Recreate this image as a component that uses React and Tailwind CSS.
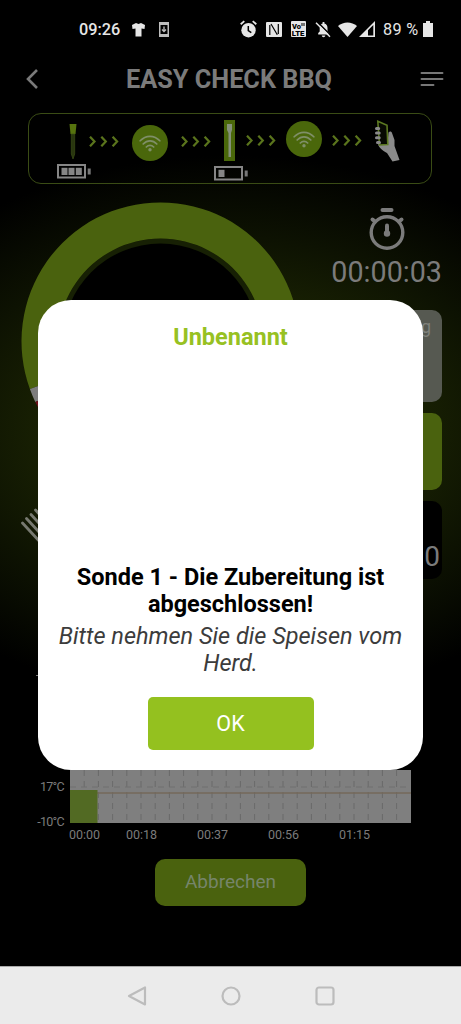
import React from 'react';

const timeLabels = ['00:00', '00:18', '00:37', '00:56', '01:15'];

function StatusBar() {
  return (
    <div className="h-[58px] shrink-0 flex items-center pl-[79px] text-[#e6e6e6]">
      <span className="w-[53px] pt-[2px] text-[16.3px] leading-5 font-medium">09:26</span>
      <svg className="w-[13px] h-[15px]" viewBox="0 0 13 15" fill="currentColor">
        <path d="M4 1 6.500 2 9 1 13 3 12.500 7 9.500 6.500V14.500H3.500V6.500L.5 7 0 3Z" />
      </svg>
      <svg className="ml-[14px] w-[10px] h-[15px]" viewBox="0 0 10 15" fill="none" stroke="#bdbdbd">
        <rect x=".75" y=".75" width="8.500" height="13.500" strokeWidth="1.500" />
        <path d="M1 2h8M1 13h8" strokeWidth="2" />
        <path d="M5 4.500v5M3 7.500l2 2 2-2" strokeWidth="1.300" />
      </svg>

      {/* Right side icons */}
      <svg className="ml-[71px] w-[17px] h-[18px]" viewBox="0 0 17 18">
        <circle cx="8.500" cy="10.200" r="7.200" fill="currentColor" />
        <path d="M.7 4.200 4.300 1.100M16.300 4.200 12.700 1.100" stroke="currentColor" strokeWidth="1.800" />
        <path d="M8.300 6v4.700l3 2" stroke="#000" strokeWidth="1.500" fill="none" />
      </svg>
      <svg className="ml-[9px] w-[16px] h-[15px]" viewBox="0 0 16 15">
        <rect width="16" height="15" rx="1" fill="currentColor" />
        <path d="M3.800 13V3M5 2 11.300 12.800M12.300 2v10" stroke="#000" strokeWidth="1.200" fill="none" />
      </svg>
      <svg className="ml-[9px] w-[15px] h-[16px]" viewBox="0 0 15 16">
        <rect width="15" height="16" rx="1" fill="currentColor" />
        <text x="1" y="7.500" fontSize="7.500" fontWeight="900" fill="#000">Vo</text>
        <path d="M11 2v3M13 2v3" stroke="#000" />
        <text x=".7" y="14.500" fontSize="7.800" fontWeight="900" fill="#000">LTE</text>
      </svg>
      <svg className="ml-[9px] w-[17px] h-[17px]" viewBox="0 0 17 17">
        <path d="M3.200 13.500V12l1.500-1.500V7C4.700 4.500 6 3 7.600 2.600V1h1.800v1.600C11.300 3 12.500 4.500 12.500 7v3.500L14 12v1.500ZM6.800 14.500h3.500c0 2.300-3.500 2.300-3.500 0Z" fill="currentColor" />
        <path d="M2.500 1 16.500 15" stroke="#000" strokeWidth="1.500" />
        <path d="M1 1.800 15 15.800" stroke="currentColor" strokeWidth="1.500" />
      </svg>
      <svg className="ml-[6px] w-[19px] h-[15px]" viewBox="0 0 19 15">
        <path d="M0 4C5.500-.8 13.500-.8 19 4L9.500 15Z" fill="currentColor" />
      </svg>
      <svg className="ml-[2px] w-[16px] h-[16px]" viewBox="0 0 16 16">
        <path d="M0 16 16 0V16Z" fill="currentColor" />
        <path d="M9 9.300 14.300 4V14.500H9Z" fill="#000" />
      </svg>
      <span className="ml-[8px] w-[40px] pt-[2px] text-[16.300px] leading-5 whitespace-nowrap tracking-[0.3px]">89 %</span>
      <svg className="w-[10px] h-[16px]" viewBox="0 0 10 16" fill="currentColor">
        <path d="M3 0h4v2h3v14H0V2h3Z" />
      </svg>
    </div>
  );
}

function Header() {
  return (
    <div className="h-[42px] shrink-0 flex items-center justify-between pl-[26px] pr-[17px]">
      <svg className="w-[12px] h-[20px]" viewBox="0 0 12 20" fill="none" stroke="#7a7a7a" strokeWidth="2.600">
        <path d="M11 1 2 10l9 9" />
      </svg>
      <h1 className="pt-[2px] text-[25.300px] leading-7 font-bold text-[#7b7b7b]">EASY CHECK BBQ</h1>
      <svg className="w-[24px] h-[16px]" viewBox="0 0 24 16" stroke="#777" strokeWidth="1.900" strokeLinecap="round">
        <path d="M1.500 2h21M1.500 8h21M1.500 14h12" />
      </svg>
    </div>
  );
}

function Arrows({ className }) {
  return (
    <svg className={`shrink-0 w-[30px] h-[11px] ${className}`} viewBox="0 0 30 11" fill="none" stroke="#5a741c" strokeWidth="2.200">
      <path d="M1 .7 5.500 5.500 1 10.300M12.300 .7l4.500 4.800-4.500 4.800M23.600 .7l4.500 4.800-4.500 4.800" />
    </svg>
  );
}

function Signal({ className }) {
  return (
    <div className={`shrink-0 size-9 rounded-full bg-[#4a670b] flex items-center justify-center ${className}`}>
      <svg className="w-[22px] h-[17px]" viewBox="0 0 22 17" fill="none" stroke="#7f8f68" strokeWidth="1.700" strokeLinecap="round">
        <path d="M1.200 5.800C6.700-.2 15.300-.2 20.800 5.800M4.200 9C8.200 4.700 13.800 4.700 17.800 9M7.300 12C9.500 9.700 12.500 9.700 14.700 12" />
        <circle cx="11" cy="14.800" r="1.700" fill="#7f8f68" stroke="none" />
      </svg>
    </div>
  );
}

function Battery({ level }) {
  return (
    <svg className="shrink-0 w-[34px] h-[15px]" viewBox="0 0 34 15">
      <rect x="1" y="1" width="27" height="12.500" fill="none" stroke="#868686" strokeWidth="2" />
      <rect x="30.700" y="4.500" width="3" height="6" fill="#777" />
      {[4.5, 11.5, 18.8].slice(0, level).map((x) => (
        <rect key={x} x={x} y="3.800" width="6" height="7.200" fill="#868686" />
      ))}
    </svg>
  );
}

function ConnectionStrip() {
  return (
    <div className="mt-[13px] mr-[29px] ml-[28px] h-[71px] shrink-0 rounded-[13px] border-[1.5px] border-[#3a4c15] flex items-start pl-[28px]">
      {/* Probe */}
      <div className="w-[34px] shrink-0 pt-[10px] flex flex-col items-center">
        <svg className="w-[8px] h-[36px] mr-[2px]" viewBox="0 0 8 36">
          <path d="M.5 0h7L6.500 10h-5Z" fill="#56730e" />
          <path d="M2.300 10h3.400v20L4 35 2.300 30Z" fill="#29360f" stroke="#3b4d16" strokeWidth=".7" />
        </svg>
        <div className="mt-[4px]"><Battery level={3} /></div>
      </div>
      <Arrows className="mt-[22px] -ml-[2px]" />
      <Signal className="mt-[11px] ml-[13px]" />
      <Arrows className="mt-[22px] ml-[13px]" />
      {/* Charging dock */}
      <div className="w-[34px] shrink-0 pt-[6px] ml-[3px] flex flex-col">
        <svg className="w-[11px] h-[41px] ml-[10px]" viewBox="0 0 11 41">
          <rect width="11" height="41" fill="#4a680a" />
          <path d="M3 4h5v6L7 13v24H4.500V13L3 10Z" fill="#84907a" />
        </svg>
        <div className="mt-[5px]"><Battery level={1} /></div>
      </div>
      <Arrows className="mt-[21px] -ml-[2px]" />
      <Signal className="mt-[7px] ml-[10px]" />
      <Arrows className="mt-[21px] ml-[10px]" />
      {/* Hand holding the phone */}
      <svg className="shrink-0 ml-[13px] mt-[6px] w-[25px] h-[42px]" viewBox="0 0 25 42">
        <path d="M13 18 13.500 12.500c1.500-1.500 3-1 3.500.5l2.500 7v6L24.500 40l-7 1.500L12 33C7 30 4.500 28 3 24.500Z" fill="#8a8a8a" />
        <path d="M2.800 1.300 12 5.200 12.800 24.500 4.500 25Z" fill="#080a02" stroke="#5b7821" strokeWidth="1.600" />
        <path d="M1.500 8.500h2.200M1.500 13h2.700M1.500 17.800h2.700M2.500 22.500h2" stroke="#8a8a8a" strokeWidth="3" strokeLinecap="round" />
      </svg>
    </div>
  );
}

function Dashboard() {
  return (
    <div className="h-[586px] shrink-0 flex justify-between pl-[21px] pr-[19px]">
      <div className="pt-[18px] flex flex-col">
        {/* Temperature dial */}
        <svg className="w-[279px] h-[279px]" viewBox="-139.500 -139.500 279 279">
          <circle r="103" fill="#172004" />
          <circle r="98" fill="#000" />
          <path d="M-130.600 47.500A139 139 0 1 1 130.600 47.500L96.800 35.200A103 103 0 1 0-96.800 35.200Z" fill="#4a620e" />
          <path d="M-130.600 47.500A139 139 0 0 0-125.200 60.500L-92 46.300A103 103 0 0 1-96.800 35.200Z" fill="#7d7d7d" />
          <path d="M-125.200 60.500A139 139 0 0 0 0 139V103A103 103 0 0 1-92 46.300Z" fill="#6d0f1b" />
        </svg>
        {/* Fork */}
        <svg className="mt-[27px] w-[30px] h-[46px]" viewBox="0 0 30 46" fill="none" stroke="#777970" strokeWidth="2.800" strokeLinecap="round">
          <path d="M1.500 15 20 35M5.500 10.500 24 30.500M10 6.500 28 26M14.500 2 30 19" />
        </svg>
        <div className="mt-[121px] ml-[15px] w-2 h-px bg-[#777]" />
      </div>

      <div className="w-[112px] pt-[24px] flex flex-col items-end">
        <svg className="w-[36px] h-[42px] mr-[37px]" viewBox="0 0 36 42" fill="none" stroke="#7b7b7b">
          <circle cx="18" cy="24.500" r="15.800" strokeWidth="3.400" />
          <path d="M13.500 2h9" strokeWidth="4" strokeLinecap="round" />
          <path d="M3.500 11.500 6 13.500M32.500 11.500 30 13.500" strokeWidth="4" strokeLinecap="round" />
          <path d="M18 17.500v8" strokeWidth="4" strokeLinecap="round" />
          <circle cx="18" cy="25.500" r="3.200" fill="#7b7b7b" stroke="none" />
        </svg>
        <div className="mt-[6px] h-[32px] text-[28.700px] leading-8 text-[#7b7b7b] whitespace-nowrap">00:00:03</div>
        <div className="mt-[22px] w-[100px] h-[92px] rounded-[10px] bg-[#565951] pt-[7px] pr-[11px] text-right text-[18px] leading-5 text-[#7f817b]">
          g
        </div>
        <div className="mt-[11px] w-[100px] h-[77px] rounded-[10px] bg-[#4a620e]" />
        <div className="mt-[11px] w-[100px] h-[78px] rounded-[10px] bg-black pt-[40px] pr-[2px] text-right text-[28px] leading-8 text-[#7b7b7b]">
          0
        </div>
      </div>
    </div>
  );
}

function Chart() {
  const columns = Array.from({ length: 23 }, (_, i) => (i + 1) * 14.2);
  return (
    <div className="shrink-0 text-[12.5px] leading-[14px] text-[#7b7b7b]">
      <div className="flex">
        <div className="w-[70px] pr-[6px] pt-[10px] flex flex-col justify-between items-end -mb-[6px] tracking-[-0.7px]">
          <span>17°C</span>
          <span>-10°C</span>
        </div>
        <svg className="w-[341px] h-[53px]" viewBox="0 0 341 53" fill="none">
          <rect width="341" height="53" fill="#7f7f7f" />
          {columns.map((x) => (
            <path key={x} d={`M${x} 0V53`} stroke="#6a6a6a" strokeDasharray="6 5" />
          ))}
          <path d="M0 17h341" stroke="#707070" strokeDasharray="6 5" />
          <path d="M0 23h341" stroke="#75695a" strokeWidth="1.300" />
          <rect y="20" width="27.500" height="33" fill="#526a23" />
        </svg>
      </div>
      <div className="pt-[5px] pl-[56px] flex">
        {timeLabels.map((label, i) => (
          <span key={label} className={i === 0 ? 'w-[57px] text-center' : 'w-[57px] mr-[14px] text-center'}>{label}</span>
        ))}
      </div>
    </div>
  );
}

function NavBar() {
  return (
    <div className="mt-auto h-[58px] shrink-0 bg-[#ebebeb] border-t border-[#aaa] flex items-center justify-center gap-[74px]">
      <svg className="size-5" viewBox="0 0 20 20" fill="none" stroke="#bcbcbc" strokeWidth="2.200" strokeLinejoin="round">
        <path d="M18 1.500v17L2 10Z" />
      </svg>
      <svg className="size-5" viewBox="0 0 20 20" fill="none" stroke="#bcbcbc" strokeWidth="2.200">
        <circle cx="10" cy="10" r="8.500" />
      </svg>
      <svg className="size-5" viewBox="0 0 20 20" fill="none" stroke="#bcbcbc" strokeWidth="2.200">
        <rect x="1.500" y="1.500" width="17" height="17" rx="2.500" />
      </svg>
    </div>
  );
}

function FinishedDialog() {
  return (
    <div className="absolute left-[38px] top-[300px] w-[385px] h-[470px] rounded-[33px] bg-white flex flex-col items-center text-center text-[23.5px] leading-[27px]">
      <h2 className="mt-[24px] font-bold text-[#97c122]">Unbenannt</h2>
      <p className="mt-auto w-[330px] font-bold text-black">Sonde 1 - Die Zubereitung ist abgeschlossen!</p>
      <p className="mt-[5px] w-[360px] italic text-[#3c3c3c]">Bitte nehmen Sie die Speisen vom Herd.</p>
      <button className="mt-[20px] mb-[20px] w-[166px] h-[53px] shrink-0 rounded-[5px] bg-[#94c11f] text-white text-[21.5px]">OK</button>
    </div>
  );
}

export default function App() {
  return (
    <div className="relative w-[461px] h-[1024px] overflow-hidden flex flex-col font-['Roboto',sans-serif] bg-black bg-[radial-gradient(ellipse_400px_275px_at_230px_430px,#202a04_0%,#1b2403_40%,#0d1202_70%,#000_100%)]">
      <StatusBar />
      <Header />
      <ConnectionStrip />
      <Dashboard />
      <Chart />
      <button className="mt-[17px] mx-auto w-[151px] h-[47px] shrink-0 rounded-[10px] bg-[#4a620e] text-[#76856a] text-[19px]">Abbrechen</button>
      <NavBar />
      <FinishedDialog />
    </div>
  );
}
